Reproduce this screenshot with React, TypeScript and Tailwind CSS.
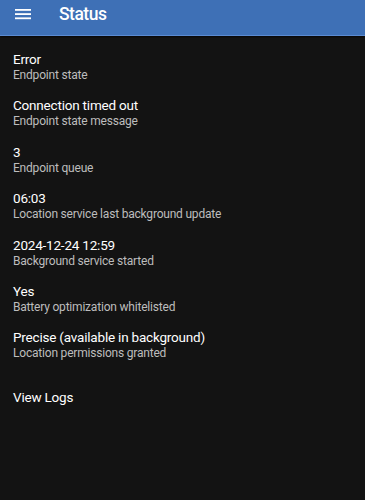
import React from "react";

const items = [
  ["Error", "Endpoint state"],
  ["Connection timed out", "Endpoint state message"],
  ["3", "Endpoint queue"],
  ["06:03", "Location service last background update"],
  ["2024-12-24 12:59", "Background service started"],
  ["Yes", "Battery optimization whitelisted"],
  ["Precise (available in background)", "Location permissions granted"],
];

export default function App() {
  return (
    <div className="w-[365px] h-[500px] bg-[#131313] overflow-hidden font-['Roboto',sans-serif]">
      <div className="h-[36px] bg-[#3e70b6] flex items-start border-b-[1.3px] border-[#5b8bd2] shadow-[0_1px_2px_rgba(0,0,0,0.7)]">
        <div className="w-[59px] pl-[15px] pt-[8.5px] flex">
          <svg width="16" height="11" viewBox="0 0 16 11">
            <rect x="0" y="0" width="16" height="1.8" fill="white" />
            <rect x="0" y="4.2" width="16" height="1.8" fill="white" />
            <rect x="0" y="8.4" width="16" height="1.8" fill="white" />
          </svg>
        </div>
        <div className="pt-[4px] text-white text-[17.5px] leading-[20px] font-medium tracking-[-0.5px]">Status</div>
      </div>
      <div className="pt-[15px] px-[13px] flex flex-col">
        {items.map(([t, s]) => (
          <div key={t} className="h-[46.4px] flex flex-col">
            <div className="text-white text-[13.5px] leading-[17px] tracking-[-0.2px]">{t}</div>
            <div className="text-[#bdbdbd] text-[12px] leading-[15px] tracking-[-0.2px]">{s}</div>
          </div>
        ))}
        <div className="mt-[13px] text-white text-[13.5px] leading-[17px] tracking-[-0.2px]">View Logs</div>
      </div>
    </div>
  );
}
